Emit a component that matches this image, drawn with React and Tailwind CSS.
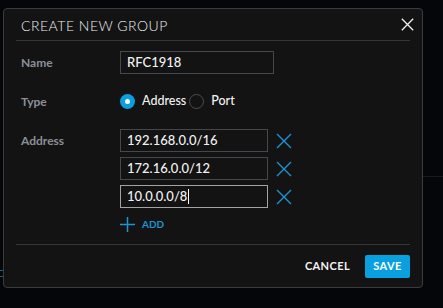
import React from 'react';

const XIcon = ({ className = '', strokeWidth = 1.4 }) => (
  <svg viewBox="0 0 16 16" className={className} fill="none" stroke="currentColor" strokeWidth={strokeWidth}>
    <path d="M1 1 L15 15 M15 1 L1 15" />
  </svg>
);

const PlusIcon = ({ className = '' }) => (
  <svg viewBox="0 0 16 16" className={className} fill="none" stroke="currentColor" strokeWidth="1.6">
    <path d="M8 0 V16 M0 8 H16" />
  </svg>
);

const Radio = ({ checked, label }) => (
  <label className="flex items-center gap-[7px]">
    {checked ? (
      <span className="w-[15px] h-[15px] rounded-full bg-[#0b9fe0] flex items-center justify-center">
        <span className="w-[5px] h-[5px] rounded-full bg-white" />
      </span>
    ) : (
      <span className="w-[15px] h-[15px] rounded-full border border-[#4a4d52]" />
    )}
    <span className="text-[12.5px] text-[#f2f2f2] font-medium">{label}</span>
  </label>
);

const AddressInput = ({ value, focused }) => (
  <div className="flex items-center gap-[8px]">
    <div
      className={`w-[148px] h-[23px] border ${focused ? 'border-[#a3a3a3]' : 'border-[#44484d]'} bg-[#131313] flex items-center px-[6px] text-[13px] text-[#f2f2f2] font-medium`}
    >
      {value}
      {focused && <span className="w-px h-[15px] bg-white ml-px" />}
    </div>
    <XIcon className="w-[16px] h-[16px] text-[#1c93d6]" />
  </div>
);

export default function App() {
  return (
    <div
      className="relative w-[443px] h-[308px] bg-[#04060a] pt-[8px] pl-[3px] overflow-hidden"
      style={{ fontFamily: 'Lato, "Open Sans", sans-serif' }}
    >
      {/* faint background page bits */}
      <div className="absolute left-[423px] right-0 top-[176px] h-px bg-[#161b22]" />
      <div className="absolute left-0 w-[3px] top-[270px] h-px bg-[#1a5f86]" />
      <div className="absolute left-0 w-[3px] top-[276px] h-px bg-[#1a5f86]" />

      <div className="relative w-[420px] h-[280px] border border-[#393b3e] rounded-[4px] bg-[#131313] flex flex-col">
        {/* Header */}
        <div className="h-[31px] flex items-center justify-between pl-[17px] pr-[8px]">
          <h2 className="text-[14px] font-light tracking-[0.5px] text-[#eef0f2] pt-[1px]">CREATE NEW GROUP</h2>
          <XIcon className="w-[13px] h-[13px] text-[#f0f0f0]" strokeWidth={1.6} />
        </div>
        <div className="mx-[12px] h-px bg-[#33363a]" />

        {/* Body */}
        <div className="pl-[17px] flex flex-col">
          <div className="flex items-center mt-[10px]">
            <span className="w-[99px] text-[12px] font-bold text-[#8b9097]">Name</span>
            <div className="w-[154px] h-[23px] border border-[#44484d] flex items-center px-[6px] text-[13px] text-[#f2f2f2] font-medium">
              RFC1918
            </div>
          </div>

          <div className="flex items-center mt-[20px] h-[15px]">
            <span className="w-[99px] text-[12px] font-bold text-[#8b9097]">Type</span>
            <div className="flex items-center gap-[3px]">
              <Radio checked label="Address" />
              <Radio label="Port" />
            </div>
          </div>

          <div className="flex mt-[20px]">
            <div className="w-[99px] h-[23px] flex items-center">
              <span className="text-[12px] font-bold text-[#8b9097]">Address</span>
            </div>
            <div className="flex flex-col gap-[5px]">
              <AddressInput value="192.168.0.0/16" />
              <AddressInput value="172.16.0.0/12" />
              <AddressInput value="10.0.0.0/8" focused />
              <div className="flex items-center gap-[7px] mt-[4px]">
                <PlusIcon className="w-[15px] h-[15px] text-[#1c93d6]" />
                <span className="text-[10px] font-bold text-[#1c93d6]">ADD</span>
              </div>
            </div>
          </div>
        </div>

        {/* Footer */}
        <div className="mx-[12px] h-px bg-[#33363a] mt-[12px]" />
        <div className="flex items-center justify-end gap-[15px] pr-[12px] mt-[10px]">
          <button className="text-[11px] font-bold tracking-[0.4px] text-[#f2f2f2]">CANCEL</button>
          <button className="w-[45px] h-[23px] rounded-[2px] bg-[#08a0df] text-[11px] font-bold tracking-[0.4px] text-white">
            SAVE
          </button>
        </div>
      </div>
    </div>
  );
}
